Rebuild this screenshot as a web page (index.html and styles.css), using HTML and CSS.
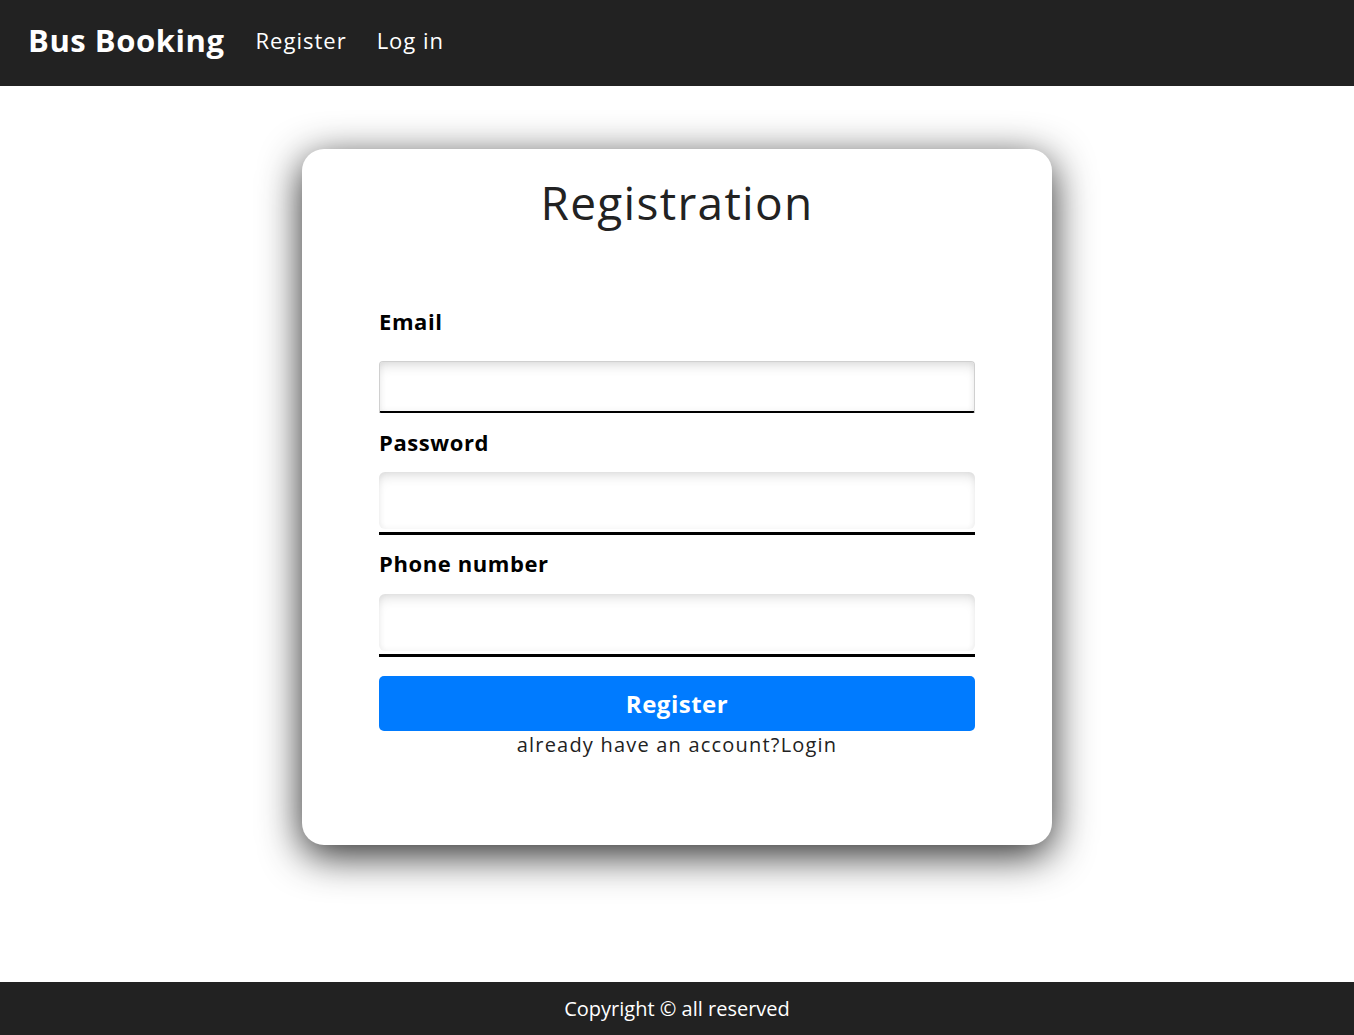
FILE: index.html
```html
<!DOCTYPE html>
<html lang="en">
<head>
<meta charset="utf-8">
<title>Bus Booking - Registration</title>
<link rel="stylesheet" href="styles.css">
</head>
<body>
<header class="navbar">
  <a class="brand" href="#">Bus Booking</a>
  <nav class="nav-links">
    <a href="#">Register</a>
    <a href="#">Log in</a>
  </nav>
</header>
<main class="content">
  <section class="card">
    <h1 class="card-title">Registration</h1>
    <form class="form">
      <label class="field-label field-first" for="email">Email</label>
      <div class="input-wrap input-wrap-focus"><input id="email" class="input input-focus" type="email"></div>
      <label class="field-label" for="password">Password</label>
      <div class="input-wrap"><input id="password" class="input" type="password"></div>
      <label class="field-label" for="phone">Phone number</label>
      <div class="input-wrap"><input id="phone" class="input" type="tel"></div>
      <button class="btn" type="button">Register</button>
      <p class="alt">already have an account?<a href="#">Login</a></p>
    </form>
  </section>
</main>
<footer class="footer">Copyright © all reserved</footer>
</body>
</html>
```
FILE: styles.css
```css
* { box-sizing: border-box; }
html, body { margin: 0; padding: 0; }
body {
  font-family: "Open Sans", "Noto Sans", "Liberation Sans", sans-serif;
  color: #222;
  background: #fff;
  min-height: 100vh;
  display: flex;
  flex-direction: column;
}
a { text-decoration: none; color: inherit; }

.navbar {
  height: 86px;
  background: #222222;
  display: flex;
  align-items: center;
  padding: 0 28px 7px;
  gap: 31px;
}
.brand {
  color: #fff;
  font-size: 31px;
  font-weight: 700;
  letter-spacing: 0.55px;
}
.nav-links { display: flex; gap: 30px; }
.nav-links a { color: #fff; font-size: 22px; letter-spacing: 1px; }

.content {
  flex: 1;
  display: flex;
  justify-content: center;
  align-items: flex-start;
  padding-top: 63px;
}
.card {
  width: 750px;
  height: 696px;
  background: #fff;
  border-radius: 22px;
  box-shadow: 0 10px 40px rgba(0, 0, 0, 0.85);
  padding: 14px 77px 0;
}
.card-title {
  margin: 0;
  text-align: center;
  font-size: 46px;
  font-weight: 500;
  line-height: 78px;
  letter-spacing: 1.3px;
  color: #222;
}
.form { display: flex; flex-direction: column; margin-top: 65px; }
.field-label {
  font-size: 22px;
  font-weight: 700;
  color: #000;
  line-height: 30px;
  letter-spacing: 0.6px;
  margin-top: 14px;
  margin-bottom: 15px;
}
.field-first { margin-top: 0; margin-bottom: 25px; }
.field-label + .input-wrap + .field-label + .input-wrap + .field-label { margin-top: 13px; margin-bottom: 16px; }
.input-wrap {
  border-bottom: 3px solid #000;
  padding-bottom: 3px;
}
.input {
  display: block;
  width: 100%;
  height: 57px;
  border: none;
  border-radius: 6px;
  background: #fff;
  box-shadow: inset 0 8px 12px -4px rgba(0, 0, 0, 0.12), inset 0 0 6px rgba(0, 0, 0, 0.06);
  outline: none;
}
.input-wrap-focus { border-bottom: none; padding-bottom: 0; }
.input-focus {
  height: 52px;
  border: 1px solid #d0d0d0;
  border-bottom: 2px solid #000;
  border-radius: 4px 4px 2px 2px;
}
.btn {
  margin-top: 19px;
  height: 55px;
  border: none;
  border-radius: 5px;
  background: #007bff;
  color: #fff;
  font-family: inherit;
  font-size: 24px;
  font-weight: 700;
  letter-spacing: 0.5px;
  cursor: pointer;
}
.alt {
  margin: 0;
  text-align: center;
  font-size: 20px;
  line-height: 28px;
  letter-spacing: 1.2px;
  color: #222;
}
.footer {
  height: 53px;
  background: #222222;
  color: #fff;
  display: flex;
  align-items: center;
  justify-content: center;
  font-size: 20px;
}
```
